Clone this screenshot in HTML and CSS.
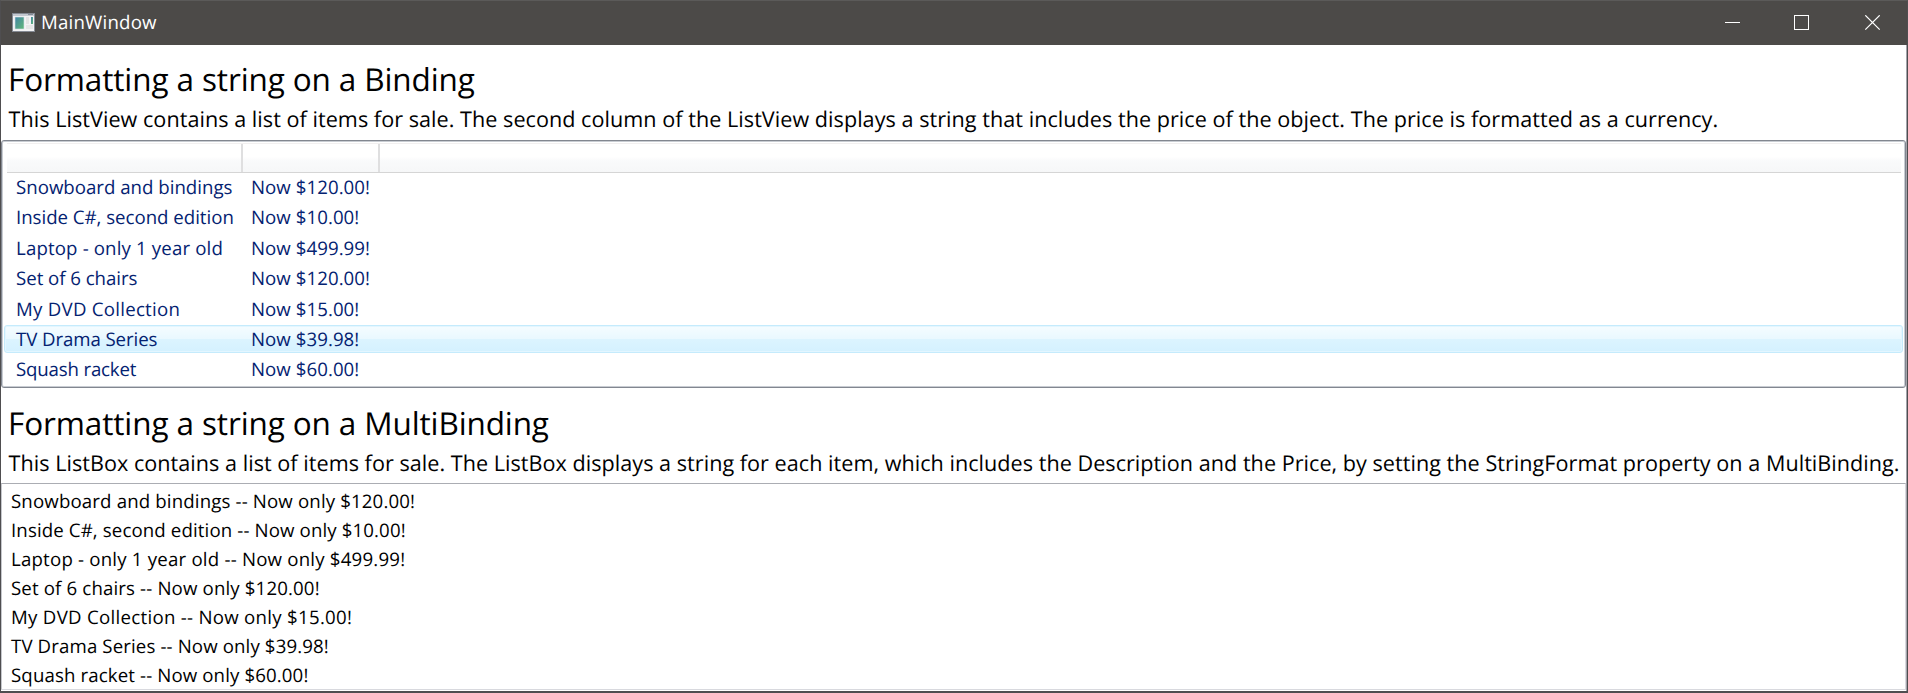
FILE: index.html
```
<!DOCTYPE html>
<html lang="en">
<head>
<meta charset="utf-8">
<title>MainWindow</title>
<link rel="stylesheet" href="styles.css">
</head>
<body>
<div class="window">
  <header class="titlebar">
    <svg class="app-icon" width="23" height="19" viewBox="0 0 23 19">
      <defs><linearGradient id="pane" x1="0" y1="0" x2="1" y2="1"><stop offset="0" stop-color="#4285a5"/><stop offset="1" stop-color="#62b878"/></linearGradient></defs>
      <rect x="0.5" y="0.5" width="22" height="18" fill="#f3f3f4" stroke="#858a93"/>
      <rect x="1" y="1" width="21" height="2" fill="#c4c8cf"/>
      <rect x="16" y="1" width="5" height="1" fill="#868c96"/>
      <rect x="3" y="4" width="9" height="12" fill="url(#pane)" stroke="#d6e2e6" stroke-width=".6"/>
      <rect x="14" y="4" width="3" height="7" fill="#e4e4e4"/>
      <rect x="14" y="12" width="7" height="4" fill="#e6e6e6"/>
      <rect x="19" y="4" width="2" height="7" fill="url(#pane)"/>
    </svg>
    <span class="title">MainWindow</span>
    <svg class="controls" width="156" height="16" viewBox="0 0 156 16" fill="none" stroke="#fff">
      <path d="M0 7.5H15"/>
      <rect x="69.5" y="0.5" width="14" height="14"/>
      <path d="M140.3 .3L154.7 14.7M154.7 .3L140.3 14.7" stroke-width="1.2"/>
    </svg>
  </header>
  <main class="content">
    <h1 class="heading">Formatting a string on a Binding</h1>
    <p class="description">This ListView contains a list of items for sale. The second column of the ListView displays a string that includes the price of the object. The price is formatted as a currency.</p>
    <div class="listview">
      <div class="columns"><span></span><span></span></div>
      <div class="item"><span>Snowboard and bindings</span><span>Now $120.00!</span></div>
      <div class="item"><span>Inside C#, second edition</span><span>Now $10.00!</span></div>
      <div class="item"><span>Laptop - only 1 year old</span><span>Now $499.99!</span></div>
      <div class="item"><span>Set of 6 chairs</span><span>Now $120.00!</span></div>
      <div class="item"><span>My DVD Collection</span><span>Now $15.00!</span></div>
      <div class="item hovered"><span>TV Drama Series</span><span>Now $39.98!</span></div>
      <div class="item"><span>Squash racket</span><span>Now $60.00!</span></div>
    </div>
    <h1 class="heading second">Formatting a string on a MultiBinding</h1>
    <p class="description">This ListBox contains a list of items for sale. The ListBox displays a string for each item, which includes the Description and the Price, by setting the StringFormat property on a MultiBinding.</p>
    <ul class="listbox">
      <li>Snowboard and bindings -- Now only $120.00!</li>
      <li>Inside C#, second edition -- Now only $10.00!</li>
      <li>Laptop - only 1 year old -- Now only $499.99!</li>
      <li>Set of 6 chairs -- Now only $120.00!</li>
      <li>My DVD Collection -- Now only $15.00!</li>
      <li>TV Drama Series -- Now only $39.98!</li>
      <li>Squash racket -- Now only $60.00!</li>
    </ul>
  </main>
</div>
</body>
</html>
```
FILE: styles.css
```
* { box-sizing: border-box; }
body { margin: 0; overflow: hidden; background: #fff; }
.window {
  width: 1908px; height: 693px;
  display: flex; flex-direction: column;
  border: solid #4f4e50; border-width: 1px 1px 2px; border-top-color: #5b5a59;
  font: 18.67px "Open Sans", "Noto Sans", sans-serif;
  text-rendering: geometricPrecision;
  white-space: nowrap; color: #000;
}
.titlebar {
  flex: none; height: 44px; padding: 0 26px 0 11px;
  display: flex; align-items: center;
  background: #4c4a48; color: #fff;
}
.app-icon { margin-top: -2px; }
.title { margin: -1px auto 0 6px; letter-spacing: .2px; }
.content { flex: 1; min-height: 0; border-right: 1px solid #a3a3ab; }
.heading { margin: 0; padding: 14px 0 0 7px; font-size: 31.5px; font-weight: 400; line-height: 42px; letter-spacing: -.12px; }
.heading.second { padding-top: 15px; }
.description { margin: 0; height: 39px; padding-left: 7.5px; font-size: 21.6px; line-height: 37px; letter-spacing: .035px; }
.second + .description { height: 38px; letter-spacing: .028px; }

.listview {
  height: 248px; padding: 2px 2px 0 1px;
  border: 1px solid #828790; border-radius: 3px;
  box-shadow: inset 0 0 0 1px #c8ccd2;
  color: #042271;
}
.columns {
  height: 30px; margin: 0 2px 0 4px; display: flex;
  border-top: 1px solid #f2f0f0; border-bottom: 1px solid #d5d5d5;
  background: linear-gradient(#fff 45%, #f9fafb 60%, #f6f7f8);
}
.columns span { border-right: 2px solid #dfdfe0; }
.columns span:first-child { width: 236px; }
.columns span:last-child { width: 137px; }
.item {
  height: 28.4px; margin: 1px 0 2px 1px; padding-left: 11px;
  display: grid; grid-template-columns: 235px auto; align-items: center;
  border: 1px solid transparent; border-radius: 3px; line-height: 26px;
}
.item span { padding-top: 1px; }
.columns + .item { margin-top: 0; }
.item span:last-child { letter-spacing: .05px; }
.item:nth-child(3) span:first-child { letter-spacing: -.02px; }
.item:nth-child(4) span:first-child { letter-spacing: .14px; }
.item:nth-child(5) span:first-child { letter-spacing: -.04px; }
.item:nth-child(6) span:first-child { letter-spacing: .25px; }
.item:nth-child(7) span:first-child { letter-spacing: -.09px; }
.item:nth-child(8) span:first-child { letter-spacing: -.17px; }
.item.hovered {
  border-color: #c5ebfc;
  background: linear-gradient(#f5fcff, #e9f8ff 50%, #dcf4ff 50%, #d4f1ff);
  box-shadow: inset 0 0 0 1px #e3f6ff;
}

.listbox {
  height: 207px; margin: 0; padding: 3px 0 0 9px; list-style: none;
  border: 1px solid #abadb3; border-left-color: #c5c7cc; border-right-color: #d9d9de; border-bottom-color: #d8d9de;
  line-height: 29px; letter-spacing: .12px;
}
.listbox li:nth-child(1), .listbox li:nth-child(4) { letter-spacing: .14px; }
.listbox li:nth-child(3) { letter-spacing: .2px; }
.listbox li:nth-child(5) { letter-spacing: .28px; }
```
